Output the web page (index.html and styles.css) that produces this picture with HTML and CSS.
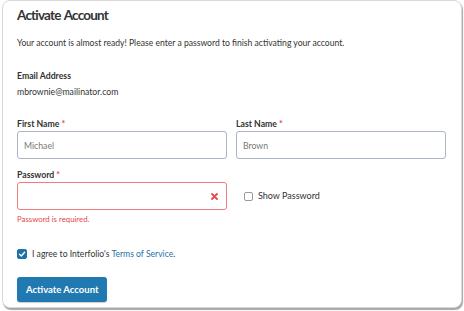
FILE: index.html
```html
<!DOCTYPE html>
<html lang="en">
<head>
  <meta charset="UTF-8">
  <title>Activate Account</title>
  <link rel="stylesheet" href="styles.css">
</head>
<body>
  <div class="card">
    <h1>Activate Account</h1>
    <p class="intro">Your account is almost ready! Please enter a password to finish activating your account.</p>

    <div class="email">
      <div class="label">Email Address</div>
      <div class="value">mbrownie@mailinator.com</div>
    </div>

    <!-- Name row -->
    <div class="row">
      <div class="field">
        <label class="label">First Name <span class="req">*</span></label>
        <input class="input" type="text" value="Michael">
      </div>
      <div class="field">
        <label class="label">Last Name <span class="req">*</span></label>
        <input class="input" type="text" value="Brown">
      </div>
    </div>

    <!-- Password row -->
    <div class="row">
      <div class="field">
        <label class="label">Password <span class="req">*</span></label>
        <div class="input input-error">
          <svg class="clear-icon" width="7" height="7" viewBox="0 0 7 7">
            <path d="M1 1 L6 6 M6 1 L1 6" stroke="#e5484d" stroke-width="1.8" stroke-linecap="round"/>
          </svg>
        </div>
        <div class="error-text">Password is required.</div>
      </div>
      <div class="field show-field">
        <label class="check">
          <span class="box"></span>
          <span>Show Password</span>
        </label>
      </div>
    </div>

    <label class="check agree">
      <span class="box checked">
        <svg width="8" height="8" viewBox="0 0 8 8">
          <path d="M1.5 4.2 L3.3 6 L6.6 2.2" fill="none" stroke="#fff" stroke-width="1.4" stroke-linecap="round" stroke-linejoin="round"/>
        </svg>
      </span>
      <span>I agree to Interfolio's <a href="#">Terms of Service</a>.</span>
    </label>

    <button class="btn">Activate Account</button>
  </div>
</body>
</html>
```

FILE: styles.css
```css
* {
  margin: 0;
  padding: 0;
  box-sizing: border-box;
}

body {
  font-family: 'Lato', 'Open Sans', sans-serif;
  background-color: #fff;
  color: #333;
  padding: 0 2px 3px 2px;
}

/* Card */
.card {
  background-color: #fff;
  border: 1px solid #d9d9d9;
  border-radius: 8px;
  box-shadow: 1px 2px 1px rgba(0, 0, 0, 0.35);
  height: 308px;
  padding: 3px 15px 0 14px;
}

h1 {
  font-size: 13.5px;
  font-weight: 700;
  letter-spacing: -0.8px;
  word-spacing: 1px;
  color: #333;
  line-height: 22px;
}

.intro {
  font-size: 8.6px;
  line-height: 12px;
  margin-top: 11px;
}

.email {
  margin-top: 21px;
}

.label {
  display: block;
  font-size: 8.7px;
  font-weight: 700;
  line-height: 12px;
}

.value {
  font-size: 8.7px;
  line-height: 12px;
  margin-top: 4px;
}

.req {
  color: #e5484d;
}

/* Form rows */
.row {
  display: grid;
  grid-template-columns: 1fr 1fr;
  gap: 9px;
  margin-top: 20px;
}

.row + .row {
  margin-top: 10px;
}

.input {
  display: block;
  width: 100%;
  height: 28px;
  margin-top: 1px;
  border: 1px solid #a9b4c4;
  border-radius: 3px;
  padding: 0 6px;
  font-family: inherit;
  font-size: 8.7px;
  color: #777;
  background: #fff;
}

.input-error {
  border-color: #f07c7e;
  display: flex;
  justify-content: flex-end;
  align-items: center;
  padding-right: 8px;
}

.error-text {
  color: #e5484d;
  font-size: 7.8px;
  line-height: 10px;
  margin-top: 4px;
}

.show-field {
  padding-top: 13px;
}

.check {
  display: flex;
  align-items: center;
  gap: 5px;
  font-size: 9px;
  line-height: 12px;
  color: #333;
}

.show-field .check {
  height: 28px;
  padding-left: 8px;
}

.box {
  width: 9px;
  height: 9px;
  border: 1px solid #999;
  border-radius: 2px;
  display: flex;
  justify-content: center;
  align-items: center;
}

.box.checked {
  width: 10px;
  height: 10px;
  background-color: #1f72a8;
  border-color: #1f72a8;
}

.agree {
  margin-top: 24px;
  font-size: 8.6px;
}

.agree a {
  color: #1f72a8;
  text-decoration: none;
}

.btn {
  display: block;
  margin-top: 17px;
  background-color: #2079b0;
  color: #fff;
  border: none;
  border-radius: 3px;
  font-family: inherit;
  font-size: 9.5px;
  font-weight: 700;
  height: 25px;
  padding: 0 9px;
  box-shadow: 0 1px 1px rgba(0, 0, 0, 0.2);
}
```
